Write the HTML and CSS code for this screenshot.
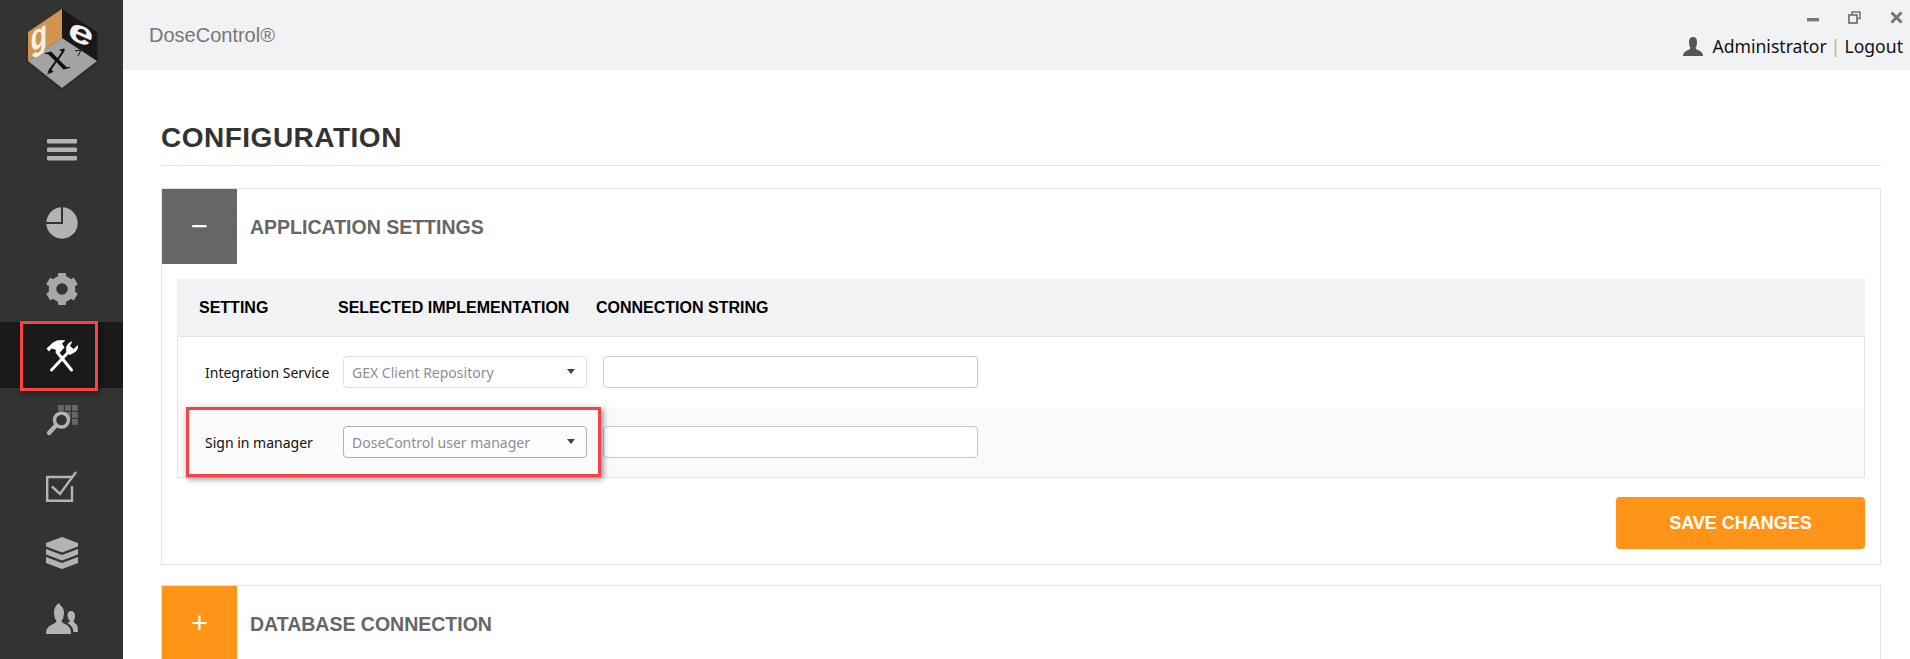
FILE: index.html
```html
<!DOCTYPE html>
<html lang="en">
<head>
<meta charset="utf-8">
<title>DoseControl - Configuration</title>
<link rel="stylesheet" href="styles.css">
</head>
<body>
<div class="app">
  <aside class="sidebar">
    <div class="logo">
      <svg width="90" height="100" viewBox="15 0 90 100">
        <polygon points="60,91 24,63 24,34 60,11 97,34 97,63" fill="#222" opacity=".35"/>
        <polygon points="60,9 26,32 26,61 60,38" fill="#d0954f"/>
        <polygon points="60,9 95,32 95,61 60,38" fill="#1c1716"/>
        <polygon points="60,38 26,61 60,88 95,61" fill="#a3a3a1"/>
        <text class="logo-g" transform="matrix(.8 -.45 .15 1 30 52)">g</text>
        <text class="logo-e" transform="matrix(1.25 .55 -.1 .95 66 38)">e</text>
        <text class="logo-x" transform="matrix(1.7 -.4 .5 1.4 47 73)">x</text>
        <path d="M45 74 L50 72 M73 51 L79 50 L76 56" stroke="#111" stroke-width="1" fill="none"/>
      </svg>
    </div>
    <nav class="nav">
      <div class="nav-item nav-menu">
        <svg width="30" height="22" viewBox="0 0 30 22"><g fill="#b3b3b3"><rect y="0" width="30" height="4.5" rx="1"/><rect y="8.5" width="30" height="4.5" rx="1"/><rect y="17" width="30" height="4.5" rx="1"/></g></svg>
      </div>
      <div class="nav-item">
        <svg width="32" height="32" viewBox="0 0 32 32"><circle cx="16" cy="16" r="15.7" fill="#b3b3b3"/><path d="M16 0 V16 H0" fill="none" stroke="#333" stroke-width="2"/></svg>
      </div>
      <div class="nav-item">
        <svg width="32" height="32" viewBox="-16 -16 32 32"><circle r="9.5" fill="none" stroke="#a8a8a8" stroke-width="7.5"/><g fill="#a8a8a8"><rect x="-4" y="-16" width="8" height="7" rx="1"/><rect x="-4" y="-16" width="8" height="7" rx="1" transform="rotate(60)"/><rect x="-4" y="-16" width="8" height="7" rx="1" transform="rotate(120)"/><rect x="-4" y="-16" width="8" height="7" rx="1" transform="rotate(180)"/><rect x="-4" y="-16" width="8" height="7" rx="1" transform="rotate(240)"/><rect x="-4" y="-16" width="8" height="7" rx="1" transform="rotate(300)"/></g></svg>
      </div>
      <div class="nav-item is-active">
        <svg width="50" height="50" viewBox="0 0 50 50">
          <path d="M34.5 40 L20 22 M14.5 40 L31 22.5" stroke="#fff" stroke-width="3" stroke-linecap="round" fill="none"/>
          <path d="M9.500 18.500 L16 12.500 Q21 9 28.500 10.500 L25 13.500 L27.500 17.500 L22 23.500 L18 19.500 L14.500 18.500 L12 21.500 Z" fill="#fff"/>
          <path d="M29.500 23 L29 18 Q30 13 35.500 11 L33 16 L36.500 19 L41 15 Q41.500 21 36.500 23 L33 25 Z" fill="#fff"/>
        </svg>
      </div>
      <div class="nav-item">
        <svg width="50" height="55" viewBox="0 0 50 55">
          <g fill="#666"><rect x="21" y="11" width="5.800" height="5.800"/><rect x="28" y="11" width="5.800" height="5.800"/><rect x="35" y="11" width="5.800" height="5.800"/><rect x="28" y="18" width="5.800" height="5.800"/><rect x="35" y="18" width="5.800" height="5.800"/><rect x="35" y="25" width="5.800" height="5.800"/></g>
          <circle cx="24.500" cy="26" r="7" fill="#333" stroke="#b3b3b3" stroke-width="3.400"/>
          <path d="M18.500 32 L12 39" stroke="#b3b3b3" stroke-width="4.400" stroke-linecap="round"/>
        </svg>
      </div>
      <div class="nav-item">
        <svg width="32" height="32" viewBox="0 0 32 32"><path d="M26 6 H1.200 V29.800 H26 V15" fill="none" stroke="#b3b3b3" stroke-width="2.400"/><path d="M6 15.500 L14 23 L30 1" fill="none" stroke="#b3b3b3" stroke-width="2.400"/></svg>
      </div>
      <div class="nav-item">
        <svg width="32" height="32" viewBox="0 0 32 32"><g fill="#b3b3b3"><path d="M16 0 L32 6 V9.500 L16 15.500 L0 9.500 V6 Z"/><path d="M0 12 L16 18 L32 12 V17.500 L16 23.500 L0 17.500 Z"/><path d="M0 20 L16 26 L32 20 V26 L16 32 L0 26 Z"/></g></svg>
      </div>
      <div class="nav-item">
        <svg width="32" height="32" viewBox="0 0 32 32"><g fill="#b3b3b3"><path d="M13 0 L15 3 Q18 5 18 10 Q18 15 15.500 18 Q16 20 21 22 Q25 24.500 25 31 H0 Q0 24.500 5 22 Q10 20 10.500 18 Q8 15 8 10 Q8 3 13 0 Z"/><path d="M25 8 Q29 8 29 13 Q29 16 27.500 18 Q28 20 30 21 Q32 22 32 29 H27.500 Q27 23 21.500 20 Q23.500 19 24 18 Q21.500 16 21.500 12.500 Q21.500 8 25 8 Z"/></g></svg>
      </div>
    </nav>
    <span class="mark mark-nav"></span>
  </aside>

  <div class="main">
    <header class="topbar">
      <div class="brand">DoseControl®</div>
      <div class="top-right">
        <div class="win-controls">
          <svg width="12" height="12" viewBox="0 0 12 12"><rect y="7" width="12" height="3.400" fill="#777"/></svg>
          <svg width="13" height="13" viewBox="0 0 13 13"><path d="M4 3.500 V1 H12 V7.500 H9" fill="none" stroke="#777" stroke-width="1.600"/><rect x="1" y="4" width="8" height="8" fill="none" stroke="#777" stroke-width="1.800"/></svg>
          <svg width="13" height="13" viewBox="0 0 13 13"><path d="M1.500 1.500 L11.500 11.500 M11.500 1.500 L1.500 11.500" stroke="#777" stroke-width="3"/></svg>
        </div>
        <div class="user-line">
          <svg class="user-icon" width="20" height="19" viewBox="0 0 20 19"><path d="M10 0 Q14 0 14 5 Q14 9 12.500 11 Q13 12.500 16 13.500 Q20 15 20 19 H0 Q0 15 4 13.500 Q7 12.500 7.500 11 Q6 9 6 5 Q6 0 10 0 Z" fill="#555"/></svg>
          <span>Administrator</span><span class="sep">|</span><span>Logout</span>
        </div>
      </div>
    </header>
    <main class="content">
      <h1 class="page-title">CONFIGURATION</h1>
      <section class="panel">
        <div class="panel-head">
          <div class="toggle toggle-open">−</div>
          <h2 class="panel-title">APPLICATION SETTINGS</h2>
        </div>
        <div class="panel-body">
          <div class="table">
            <div class="table-head">
              <div class="th th-setting">SETTING</div>
              <div class="th th-impl">SELECTED IMPLEMENTATION</div>
              <div class="th">CONNECTION STRING</div>
            </div>
            <div class="row">
              <div class="row-label">Integration Service</div>
              <div class="select"><span>GEX Client Repository</span><i class="caret"></i></div>
              <div class="input"></div>
            </div>
            <div class="row row-alt">
              <div class="row-label">Sign in manager</div>
              <div class="select select-strong"><span>DoseControl user manager</span><i class="caret"></i></div>
              <div class="input"></div>
              <span class="mark mark-row"></span>
            </div>
          </div>
          <div class="actions"><button class="save" type="button">SAVE CHANGES</button></div>
        </div>
      </section>
      <section class="panel panel-closed">
        <div class="panel-head">
          <div class="toggle toggle-closed">+</div>
          <h2 class="panel-title">DATABASE CONNECTION</h2>
        </div>
      </section>
    </main>
  </div>
</div>
</body>
</html>
```
FILE: styles.css
```css
* { box-sizing: border-box; }
html, body { margin: 0; height: 100%; overflow: hidden; background: #fff; }
body { font-family: "Liberation Sans", Arial, sans-serif; color: #000; }
.app { display: flex; height: 659px; overflow: hidden; }

.sidebar { position: relative; flex: 0 0 123px; background: #333; }
.logo { height: 124px; display: flex; justify-content: center; align-items: flex-start; }
.logo-g { font: italic bold 34px "Liberation Sans", sans-serif; fill: #f4f1ec; }
.logo-e { font: italic bold 34px "Liberation Sans", sans-serif; fill: #f2f2f2; }
.logo-x { font: italic 30px "Liberation Serif", serif; fill: #111; }
.nav { display: flex; flex-direction: column; }
.nav-item { height: 66px; display: flex; align-items: center; justify-content: center; }
.nav-menu { padding-bottom: 14px; }
.is-active { background: #1a1a1a; }
.mark { position: absolute; border: 3px solid #f9414a; box-shadow: 2px 2px 6px rgba(0, 0, 0, .45); pointer-events: none; }
.mark-nav { left: 20px; top: 321px; width: 78px; height: 70px; }

.main { flex: 1; min-width: 0; display: flex; flex-direction: column; }
.topbar { height: 70px; flex: none; background: #f1f2f4; display: flex; justify-content: space-between; padding-left: 26px; }
.brand { font-size: 20px; color: #777; line-height: 70px; }
.top-right { display: flex; flex-direction: column; align-items: flex-end; padding-right: 7px; padding-top: 11px; }
.win-controls { display: flex; gap: 29px; height: 14px; align-items: flex-start; }
.user-line { display: flex; align-items: center; margin-top: 9px; font: 17.600px "Noto Sans", sans-serif; line-height: 24px; color: #111; }
.user-icon { margin-right: 9px; }
.sep { color: #d9a05a; margin: 0 4px; }

.content { flex: 1; padding: 0 29px 0 38px; overflow: hidden; }
.page-title { margin: 0; height: 96px; padding-top: 50px; font-size: 28px; letter-spacing: .5px; line-height: 36px; font-weight: 700; color: #333; border-bottom: 1px solid #e3e3e3; }
.panel { border: 1px solid #e3e3e3; margin-top: 22px; }
.panel-head { display: flex; align-items: center; height: 75px; }
.toggle { width: 75px; height: 75px; flex: none; display: flex; align-items: center; justify-content: center; color: #fff; font-size: 29px; line-height: 1; }
.toggle-open { background: #666; }
.toggle-closed { background: #ff9418; }
.panel-title { margin: 2px 0 0 13px; font-size: 19.500px; font-weight: 700; color: #666; }
.panel-body { padding: 15px; }

.table { border: 1px solid #e3e3e3; border-top: 0; }
.table-head { height: 58px; margin: 0 -1px; padding-left: 22px; display: flex; align-items: center; background: #f1f2f4; border-bottom: 1px solid #e3e3e3; border-radius: 3px 3px 0 0; }
.th { font-size: 16px; font-weight: 700; color: #000; }
.th-setting { width: 139px; }
.th-impl { width: 258px; }
.row { position: relative; height: 70px; display: flex; align-items: center; padding-left: 27px; gap: 16px; background: #fff; }
.row-alt { background: #fafafa; }
.row-label { width: 122px; font: 14px "Noto Sans", sans-serif; color: #111; white-space: nowrap; }
.select { width: 244px; height: 32px; display: flex; align-items: center; justify-content: space-between; padding: 0 8px; background: #fff; border: 1px solid #ddd; border-radius: 4px; font: 14px "Noto Sans", sans-serif; color: #8a8f96; }
.select-strong { border-color: #b0b0b0; background: #fcfcfc; }
.caret { width: 0; height: 0; border-left: 4.500px solid transparent; border-right: 4.500px solid transparent; border-top: 5px solid #444; margin-right: 3px; margin-top: -2px; }
.input { width: 375px; height: 32px; background: #fff; border: 1px solid #c8c8c8; border-radius: 4px; }
.mark-row { left: 8px; top: 0; width: 415px; height: 70px; }

.actions { display: flex; justify-content: flex-end; margin-top: 19px; }
.save { width: 249px; height: 52px; border: 0; border-radius: 4px; background: #ff9418; color: #fff; font: 700 18px "Liberation Sans", sans-serif; }
.panel-closed { margin-top: 20px; }
```
